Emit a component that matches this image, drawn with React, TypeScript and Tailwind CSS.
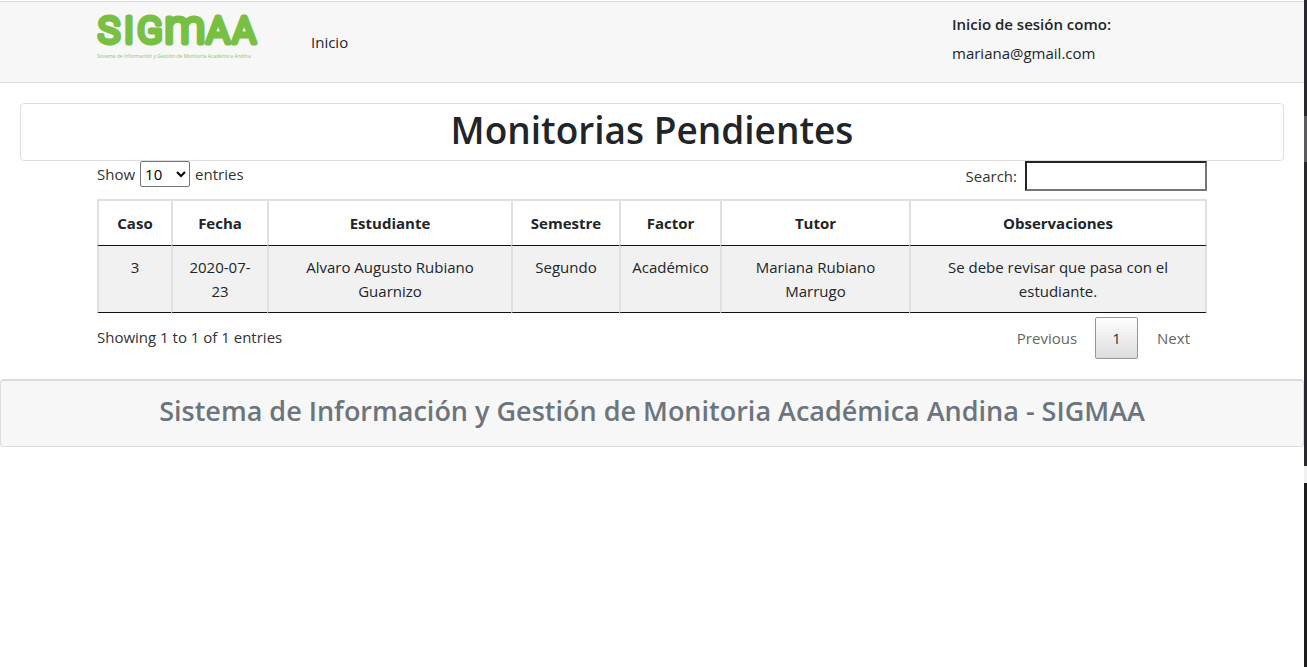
import React from "react";

const columns = [
  { title: "Caso", width: "w-[74px]" },
  { title: "Fecha", width: "w-[96px]" },
  { title: "Estudiante", width: "w-[244px]" },
  { title: "Semestre", width: "w-[108px]" },
  { title: "Factor", width: "w-[101px]" },
  { title: "Tutor", width: "w-[189px]" },
  { title: "Observaciones", width: "w-[298px]" },
];

const rows = [
  [
    "3",
    "2020-07-23",
    "Alvaro Augusto Rubiano Guarnizo",
    "Segundo",
    "Académico",
    "Mariana Rubiano Marrugo",
    "Se debe revisar que pasa con el estudiante.",
  ],
];

function Logo() {
  return (
    <svg viewBox="0 0 164 52" className="block h-[52px] w-[164px] overflow-visible" role="img" aria-label="SIGMAA">
      <g
        fill="#78c043"
        stroke="#78c043"
        strokeWidth="5"
        strokeLinejoin="round"
        strokeLinecap="round"
        textAnchor="middle"
        className="font-['Roboto'] text-[37px] font-light"
      >
        <text y="33">
          <tspan x="12">S</tspan>
          <tspan x="32">I</tspan>
          <tspan x="53">G</tspan>
          <tspan x="88" className="text-[46px] lowercase">M</tspan>
          <tspan x="121">A</tspan>
          <tspan x="147">A</tspan>
        </text>
      </g>
      <text x="0" y="48" fill="#8cc863" className="font-['Open_Sans'] text-[5px]">
        Sistema de Información y Gestión de Monitoría Académica Andina
      </text>
    </svg>
  );
}

function Header() {
  return (
    <header className="mt-px border-y border-[#dcdcdc] bg-[#f7f7f7]">
      <div className="mx-auto flex h-20 max-w-[1110px] items-start">
        <a href="#" className="mt-2 block">
          <Logo />
        </a>
        <nav className="ml-[50px] mt-7">
          <a href="#" className="block leading-6">
            Inicio
          </a>
        </nav>
        <div className="ml-auto mt-[10px] w-[255px]">
          <p className="font-semibold leading-6">Inicio de sesión como:</p>
          <p className="mt-[5px] leading-6">mariana@gmail.com</p>
        </div>
      </div>
    </header>
  );
}

function CasesTable() {
  return (
    <table className="mt-2 w-full table-fixed border-separate border-spacing-0 text-center">
      <thead>
        <tr>
          {columns.map((c) => (
            <th
              key={c.title}
              className={`${c.width} border-b border-l-2 border-t-2 border-b-[#111] border-l-[#dee0e3] border-t-[#dee0e3] py-[10px] font-bold leading-6 last:border-r-2 last:border-r-[#dee0e3]`}
            >
              {c.title}
            </th>
          ))}
        </tr>
      </thead>
      <tbody>
        {rows.map((row) => (
          <tr key={row[0]} className="bg-[#f1f1f1]">
            {row.map((cell, i) => (
              <td
                key={i}
                className="border-b border-l-2 border-b-[#111] border-l-[#dee0e3] px-[10px] py-[9px] align-top leading-6 last:border-r-2 last:border-r-[#dee0e3]"
              >
                {cell}
              </td>
            ))}
          </tr>
        ))}
      </tbody>
    </table>
  );
}

function Scrollbar() {
  return (
    <div aria-hidden="true" className="flex w-[3px] shrink-0 flex-col bg-[#27282b]">
      <div className="h-[116px]" />
      <div className="h-[46px] bg-[#5a5b5e]" />
      <div className="h-[304px]" />
      <div className="h-[17px] bg-[#f1f1f1]" />
      <div className="grow bg-[#1c1c1e]" />
    </div>
  );
}

export default function App() {
  return (
    <div className="flex min-h-screen bg-white font-['Open_Sans','Noto_Sans',sans-serif] text-[15px] text-[#212529]">
      <div className="min-w-0 grow">
        <Header />
        <main>
          <div className="mx-5 mt-5 rounded border border-[#dfdfdf] pb-[6px] pt-[2px]">
            <h1 className="text-center text-[37px] font-semibold leading-[48px]">Monitorias Pendientes</h1>
          </div>
          <div className="mx-auto max-w-[1110px]">
            <div className="flex items-start justify-between text-[#333]">
              <label className="flex items-center gap-[5px]">
                Show
                <select
                  defaultValue="10"
                  className="h-[26px] w-[50px] rounded-xs border border-[#767676] bg-white text-black"
                >
                  <option>10</option>
                  <option>25</option>
                  <option>50</option>
                  <option>100</option>
                </select>
                entries
              </label>
              <label className="flex items-center gap-2">
                Search:
                <input
                  type="search"
                  className="h-[30px] w-[182px] border-2 border-b-[#767676] border-l-[#212529] border-r-[#767676] border-t-[#212529] bg-white px-1"
                />
              </label>
            </div>
            <CasesTable />
            <div className="flex items-start justify-between pt-1 text-[#333]">
              <p className="mt-2 leading-6">Showing 1 to 1 of 1 entries</p>
              <div className="flex gap-[2px] text-[#666]">
                <button type="button" className="h-[42px] px-4">
                  Previous
                </button>
                <button
                  type="button"
                  className="h-[42px] w-[43px] rounded-xs border border-[#979797] bg-linear-to-b from-white to-[#dcdcdc] text-[#333]"
                >
                  1
                </button>
                <button type="button" className="h-[42px] px-[17px]">
                  Next
                </button>
              </div>
            </div>
          </div>
        </main>
        <footer className="mt-5 rounded border border-t-2 border-[#dcdcdc] bg-[#f7f7f7] pb-[18px] pt-[13px]">
          <h2 className="text-center text-[27px] font-semibold leading-[34px] text-[#6c757d]">
            Sistema de Información y Gestión de Monitoria Académica Andina - SIGMAA
          </h2>
        </footer>
      </div>
      <Scrollbar />
    </div>
  );
}
